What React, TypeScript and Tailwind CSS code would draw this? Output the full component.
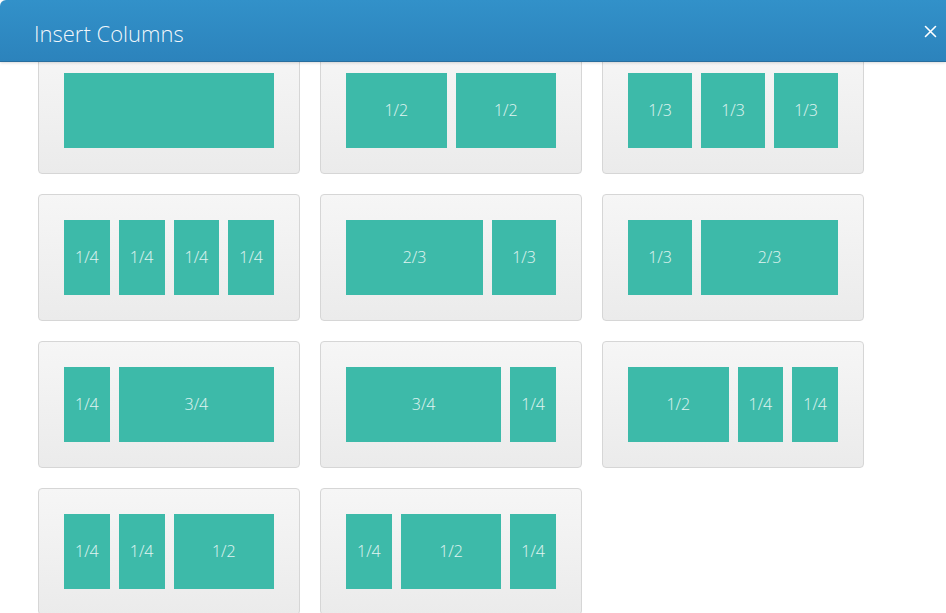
import React from "react";

type Layout = number[]; // spans out of 12

const layouts: Layout[] = [
  [12],
  [6, 6],
  [4, 4, 4],
  [3, 3, 3, 3],
  [8, 4],
  [4, 8],
  [3, 9],
  [9, 3],
  [6, 3, 3],
  [3, 3, 6],
  [3, 6, 3],
];

const spanClass: Record<number, string> = {
  3: "col-span-3",
  4: "col-span-4",
  6: "col-span-6",
  8: "col-span-8",
  9: "col-span-9",
  12: "col-span-12",
};

const label: Record<number, string> = {
  3: "1/4",
  4: "1/3",
  6: "1/2",
  8: "2/3",
  9: "3/4",
  12: "",
};

function LayoutCard({ spans }: { spans: Layout }) {
  return (
    <div className="w-[262px] h-[127px] rounded-[4px] border border-[#d6d6d6] bg-gradient-to-b from-[#f6f6f6] to-[#ebebeb] px-[25px] py-[25px] cursor-pointer">
      <div className="grid grid-cols-12 gap-x-[9px] h-[75px]">
        {spans.map((s, i) => (
          <div
            key={i}
            className={`${spanClass[s]} bg-[#3dbaa9] flex items-center justify-center pb-[2px] text-[16px] font-light text-white/85`}
          >
            {label[s]}
          </div>
        ))}
      </div>
    </div>
  );
}

export default function App() {
  return (
    <div
      className="w-[946px] h-[613px] overflow-hidden bg-white flex flex-col"
      style={{ fontFamily: '"Open Sans", "Noto Sans", sans-serif' }}
    >
      <div className="h-[62px] shrink-0 rounded-tl-[6px] bg-gradient-to-b from-[#3291c9] to-[#2c83bc] border-b border-[#286e9e] flex items-center justify-between pl-[34px] pr-[8px] relative z-10 shadow-[0_1px_3px_rgba(0,0,0,0.15)]">
        <h1 className="text-[22px] font-light text-white/95 pt-[6px]">Insert Columns</h1>
        <button className="text-white w-[16px] h-[16px] flex items-center justify-center mt-[2px]">
          <svg width="13" height="13" viewBox="0 0 13 13">
            <path d="M1.5 1.5 L11.5 11.5 M11.5 1.5 L1.5 11.5" stroke="white" strokeWidth="1.6" strokeLinecap="round" />
          </svg>
        </button>
      </div>
      <div className="flex-1 overflow-hidden">
        <div className="-mt-[15px] pl-[38px] grid grid-cols-[262px_262px_262px] gap-x-[20px] gap-y-[20px]">
          {layouts.map((l, i) => (
            <LayoutCard key={i} spans={l} />
          ))}
        </div>
      </div>
    </div>
  );
}
